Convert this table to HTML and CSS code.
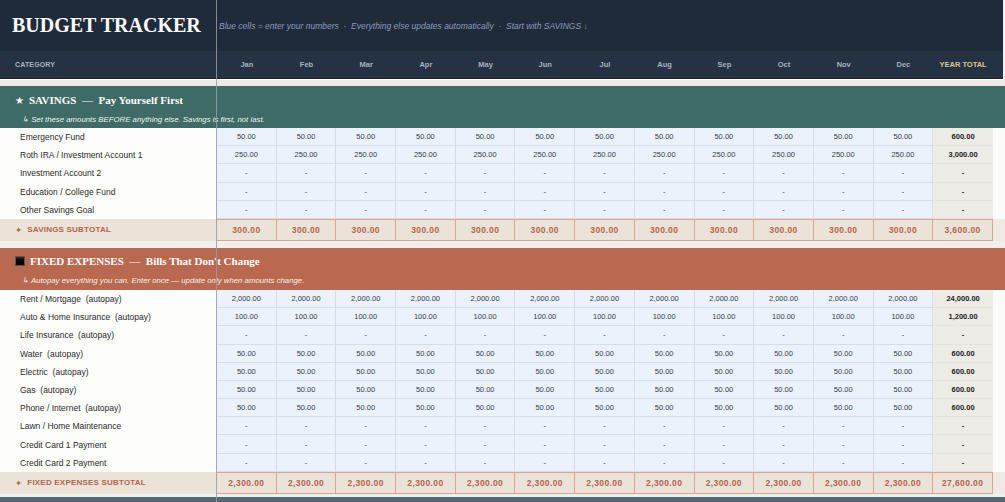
FILE: index.html
```html
<!DOCTYPE html>
<html>
<head>
<meta charset="utf-8">
<link rel="stylesheet" href="styles.css">
</head>
<body>
<div class="sheet">
  <header class="titlebar">
    <h1 class="title">BUDGET TRACKER</h1>
    <p class="hint">Blue cells = enter your numbers &nbsp;·&nbsp; Everything else updates automatically &nbsp;·&nbsp; Start with SAVINGS ↓</p>
  </header>
  <div class="row colhead">
    <div class="ch-cat">CATEGORY</div>
    <div class="ch">Jan</div><div class="ch">Feb</div><div class="ch">Mar</div><div class="ch">Apr</div><div class="ch">May</div><div class="ch">Jun</div><div class="ch">Jul</div><div class="ch">Aug</div><div class="ch">Sep</div><div class="ch">Oct</div><div class="ch">Nov</div><div class="ch">Dec</div>
    <div class="ch ch-total">YEAR TOTAL</div>
    <div></div>
  </div>
  <div class="gap first"></div>

  <section class="sec sec-savings">
    <div class="sec-title"><span class="star">★</span>SAVINGS &nbsp;—&nbsp; Pay Yourself First</div>
    <div class="sec-note">↳ Set these amounts BEFORE anything else. Savings is first, not last.</div>
  </section>
  <div class="row data"><div class="cat">Emergency Fund</div><div class="v">50.00</div><div class="v">50.00</div><div class="v">50.00</div><div class="v">50.00</div><div class="v">50.00</div><div class="v">50.00</div><div class="v">50.00</div><div class="v">50.00</div><div class="v">50.00</div><div class="v">50.00</div><div class="v">50.00</div><div class="v">50.00</div><div class="t">600.00</div><div class="fill"></div></div>
  <div class="row data"><div class="cat">Roth IRA / Investment Account 1</div><div class="v">250.00</div><div class="v">250.00</div><div class="v">250.00</div><div class="v">250.00</div><div class="v">250.00</div><div class="v">250.00</div><div class="v">250.00</div><div class="v">250.00</div><div class="v">250.00</div><div class="v">250.00</div><div class="v">250.00</div><div class="v">250.00</div><div class="t">3,000.00</div><div class="fill"></div></div>
  <div class="row data"><div class="cat">Investment Account 2</div><div class="v">-</div><div class="v">-</div><div class="v">-</div><div class="v">-</div><div class="v">-</div><div class="v">-</div><div class="v">-</div><div class="v">-</div><div class="v">-</div><div class="v">-</div><div class="v">-</div><div class="v">-</div><div class="t">-</div><div class="fill"></div></div>
  <div class="row data"><div class="cat">Education / College Fund</div><div class="v">-</div><div class="v">-</div><div class="v">-</div><div class="v">-</div><div class="v">-</div><div class="v">-</div><div class="v">-</div><div class="v">-</div><div class="v">-</div><div class="v">-</div><div class="v">-</div><div class="v">-</div><div class="t">-</div><div class="fill"></div></div>
  <div class="row data"><div class="cat">Other Savings Goal</div><div class="v">-</div><div class="v">-</div><div class="v">-</div><div class="v">-</div><div class="v">-</div><div class="v">-</div><div class="v">-</div><div class="v">-</div><div class="v">-</div><div class="v">-</div><div class="v">-</div><div class="v">-</div><div class="t">-</div><div class="fill"></div></div>
  <div class="row sub"><div class="sub-cat"><span class="spark">✦</span>SAVINGS SUBTOTAL</div><div class="sv">300.00</div><div class="sv">300.00</div><div class="sv">300.00</div><div class="sv">300.00</div><div class="sv">300.00</div><div class="sv">300.00</div><div class="sv">300.00</div><div class="sv">300.00</div><div class="sv">300.00</div><div class="sv">300.00</div><div class="sv">300.00</div><div class="sv">300.00</div><div class="sv">3,600.00</div><div class="fill"></div></div>
  <div class="gap"></div>

  <section class="sec sec-fixed">
    <div class="sec-title"><span class="sq"></span>FIXED EXPENSES &nbsp;—&nbsp; Bills That Don't Change</div>
    <div class="sec-note">↳ Autopay everything you can. Enter once — update only when amounts change.</div>
  </section>
  <div class="row data"><div class="cat">Rent / Mortgage&nbsp; (autopay)</div><div class="v">2,000.00</div><div class="v">2,000.00</div><div class="v">2,000.00</div><div class="v">2,000.00</div><div class="v">2,000.00</div><div class="v">2,000.00</div><div class="v">2,000.00</div><div class="v">2,000.00</div><div class="v">2,000.00</div><div class="v">2,000.00</div><div class="v">2,000.00</div><div class="v">2,000.00</div><div class="t">24,000.00</div><div class="fill"></div></div>
  <div class="row data"><div class="cat">Auto &amp; Home Insurance&nbsp; (autopay)</div><div class="v">100.00</div><div class="v">100.00</div><div class="v">100.00</div><div class="v">100.00</div><div class="v">100.00</div><div class="v">100.00</div><div class="v">100.00</div><div class="v">100.00</div><div class="v">100.00</div><div class="v">100.00</div><div class="v">100.00</div><div class="v">100.00</div><div class="t">1,200.00</div><div class="fill"></div></div>
  <div class="row data"><div class="cat">Life Insurance&nbsp; (autopay)</div><div class="v">-</div><div class="v">-</div><div class="v">-</div><div class="v">-</div><div class="v">-</div><div class="v">-</div><div class="v">-</div><div class="v">-</div><div class="v">-</div><div class="v">-</div><div class="v">-</div><div class="v">-</div><div class="t">-</div><div class="fill"></div></div>
  <div class="row data"><div class="cat">Water&nbsp; (autopay)</div><div class="v">50.00</div><div class="v">50.00</div><div class="v">50.00</div><div class="v">50.00</div><div class="v">50.00</div><div class="v">50.00</div><div class="v">50.00</div><div class="v">50.00</div><div class="v">50.00</div><div class="v">50.00</div><div class="v">50.00</div><div class="v">50.00</div><div class="t">600.00</div><div class="fill"></div></div>
  <div class="row data"><div class="cat">Electric&nbsp; (autopay)</div><div class="v">50.00</div><div class="v">50.00</div><div class="v">50.00</div><div class="v">50.00</div><div class="v">50.00</div><div class="v">50.00</div><div class="v">50.00</div><div class="v">50.00</div><div class="v">50.00</div><div class="v">50.00</div><div class="v">50.00</div><div class="v">50.00</div><div class="t">600.00</div><div class="fill"></div></div>
  <div class="row data"><div class="cat">Gas&nbsp; (autopay)</div><div class="v">50.00</div><div class="v">50.00</div><div class="v">50.00</div><div class="v">50.00</div><div class="v">50.00</div><div class="v">50.00</div><div class="v">50.00</div><div class="v">50.00</div><div class="v">50.00</div><div class="v">50.00</div><div class="v">50.00</div><div class="v">50.00</div><div class="t">600.00</div><div class="fill"></div></div>
  <div class="row data"><div class="cat">Phone / Internet&nbsp; (autopay)</div><div class="v">50.00</div><div class="v">50.00</div><div class="v">50.00</div><div class="v">50.00</div><div class="v">50.00</div><div class="v">50.00</div><div class="v">50.00</div><div class="v">50.00</div><div class="v">50.00</div><div class="v">50.00</div><div class="v">50.00</div><div class="v">50.00</div><div class="t">600.00</div><div class="fill"></div></div>
  <div class="row data"><div class="cat">Lawn / Home Maintenance</div><div class="v">-</div><div class="v">-</div><div class="v">-</div><div class="v">-</div><div class="v">-</div><div class="v">-</div><div class="v">-</div><div class="v">-</div><div class="v">-</div><div class="v">-</div><div class="v">-</div><div class="v">-</div><div class="t">-</div><div class="fill"></div></div>
  <div class="row data"><div class="cat">Credit Card 1 Payment</div><div class="v">-</div><div class="v">-</div><div class="v">-</div><div class="v">-</div><div class="v">-</div><div class="v">-</div><div class="v">-</div><div class="v">-</div><div class="v">-</div><div class="v">-</div><div class="v">-</div><div class="v">-</div><div class="t">-</div><div class="fill"></div></div>
  <div class="row data"><div class="cat">Credit Card 2 Payment</div><div class="v">-</div><div class="v">-</div><div class="v">-</div><div class="v">-</div><div class="v">-</div><div class="v">-</div><div class="v">-</div><div class="v">-</div><div class="v">-</div><div class="v">-</div><div class="v">-</div><div class="v">-</div><div class="t">-</div><div class="fill"></div></div>
  <div class="row sub"><div class="sub-cat"><span class="spark">✦</span>FIXED EXPENSES SUBTOTAL</div><div class="sv">2,300.00</div><div class="sv">2,300.00</div><div class="sv">2,300.00</div><div class="sv">2,300.00</div><div class="sv">2,300.00</div><div class="sv">2,300.00</div><div class="sv">2,300.00</div><div class="sv">2,300.00</div><div class="sv">2,300.00</div><div class="sv">2,300.00</div><div class="sv">2,300.00</div><div class="sv">2,300.00</div><div class="sv">27,600.00</div><div class="fill"></div></div>
  <div class="gap small"></div>
  <div class="nextbar"></div>

  <div class="freeze"></div>
</div>
</body>
</html>
```

FILE: styles.css
```css
html, body {
  margin: 0;
  padding: 0;
  background: #f3f1ec;
  overflow: hidden;
}
.sheet {
  position: relative;
  width: 1005px;
  height: 502px;
  overflow: hidden;
  font-family: "Liberation Sans", Arial, sans-serif;
  background: #f3f1ec;
}
.titlebar {
  height: 51px;
  margin-right: 2px;
  background: #1f2a3a;
  display: flex;
  align-items: center;
}
.title {
  margin: 0;
  width: 207px;
  padding-left: 12px;
  box-sizing: border-box;
  font-family: "Liberation Serif", "Times New Roman", serif;
  font-weight: bold;
  font-size: 20px;
  color: #ffffff;
  white-space: nowrap;
}
.hint {
  margin: 0 0 0 12px;
  font-style: italic;
  font-size: 8.5px;
  color: #8b9bb8;
  white-space: nowrap;
}
.row {
  display: grid;
  grid-template-columns: 217px repeat(13, 59.7px) 1fr;
}
.colhead {
  height: 28px;
  margin-right: 2px;
  background: #243244;
  border-bottom: 1px solid #172030;
  box-sizing: border-box;
  align-items: center;
  font-weight: bold;
  font-size: 7.5px;
  color: #a9b2bf;
}
.ch-cat {
  padding-left: 15px;
  font-size: 7px;
  letter-spacing: 0.15px;
}
.ch { text-align: center; }
.ch-total { color: #d9c98b; }
.gap {
  height: 7px;
  background: #f1efe9;
}
.gap.first {
  border-top: 1px solid #ffffff;
  height: 6px;
  background: #ecebe4;
}
.gap.small { height: 3px; }
.nextbar {
  height: 10px;
  background: #56677a;
}
.sec {
  height: 42px;
  box-sizing: border-box;
  color: #ffffff;
}
.sec-savings { background: #3f6b66; }
.sec-fixed { background: #b8694f; }
.sec-title {
  height: 28px;
  padding-left: 15px;
  font-family: "Liberation Serif", "Times New Roman", serif;
  font-weight: bold;
  font-size: 11px;
  display: flex;
  align-items: center;
  white-space: nowrap;
}
.sec-fixed .sec-title { height: 26px; }
.star {
  font-family: "DejaVu Sans", sans-serif;
  font-size: 10px;
  margin-right: 5px;
}
.sq {
  display: inline-block;
  width: 10px;
  height: 10px;
  border-radius: 2px;
  background: linear-gradient(#3a3a3a, #050505 40%, #000);
  box-shadow: inset 0 0 0 1px #555;
  margin-right: 5px;
}
.sec-note {
  height: 12px;
  line-height: 12px;
  padding-left: 22px;
  font-style: italic;
  font-size: 7.8px;
  color: #eef3f2;
  white-space: nowrap;
}
.sec-fixed .sec-note { height: 14px; line-height: 14px; color: #fbefea; }
.data {
  height: 18.2px;
  font-size: 7.5px;
  color: #353b48;
}
.data > div {
  display: flex;
  align-items: center;
  justify-content: center;
  box-sizing: border-box;
}
.data .cat {
  justify-content: flex-start;
  padding-left: 20px;
  background: #fdfdfc;
  font-size: 8.5px;
  color: #2a2a2a;
  white-space: nowrap;
}
.data .v {
  background: #ebf2fc;
  border-right: 1px solid #d6dde8;
  border-bottom: 1px solid #d6dde8;
}
.data .t {
  background: #ecebe6;
  border-bottom: 1px solid #e4e3de;
  font-weight: bold;
  color: #222222;
}
.data .fill { background: #fbfbf9; }
.sub {
  height: 22px;
  background: #ebe3d8;
  font-weight: bold;
  color: #b4644a;
}
.sub > div {
  display: flex;
  align-items: center;
  justify-content: center;
  box-sizing: border-box;
}
.sub .sub-cat {
  justify-content: flex-start;
  padding-left: 15px;
  font-size: 8px;
  letter-spacing: 0.2px;
  white-space: nowrap;
}
.spark {
  font-family: "DejaVu Sans", sans-serif;
  font-size: 8.5px;
  margin-right: 5px;
}
.sub .sv {
  font-size: 8.5px;
  letter-spacing: 0.4px;
  border-top: 1px solid #d6a893;
  border-bottom: 1px solid #d6a893;
  border-right: 1px solid #d6a893;
}
.sub .fill { background: #efebe4; }
.freeze {
  position: absolute;
  left: 216px;
  top: 0;
  bottom: 0;
  width: 1px;
  background: rgba(150, 156, 166, 0.85);
}
```
